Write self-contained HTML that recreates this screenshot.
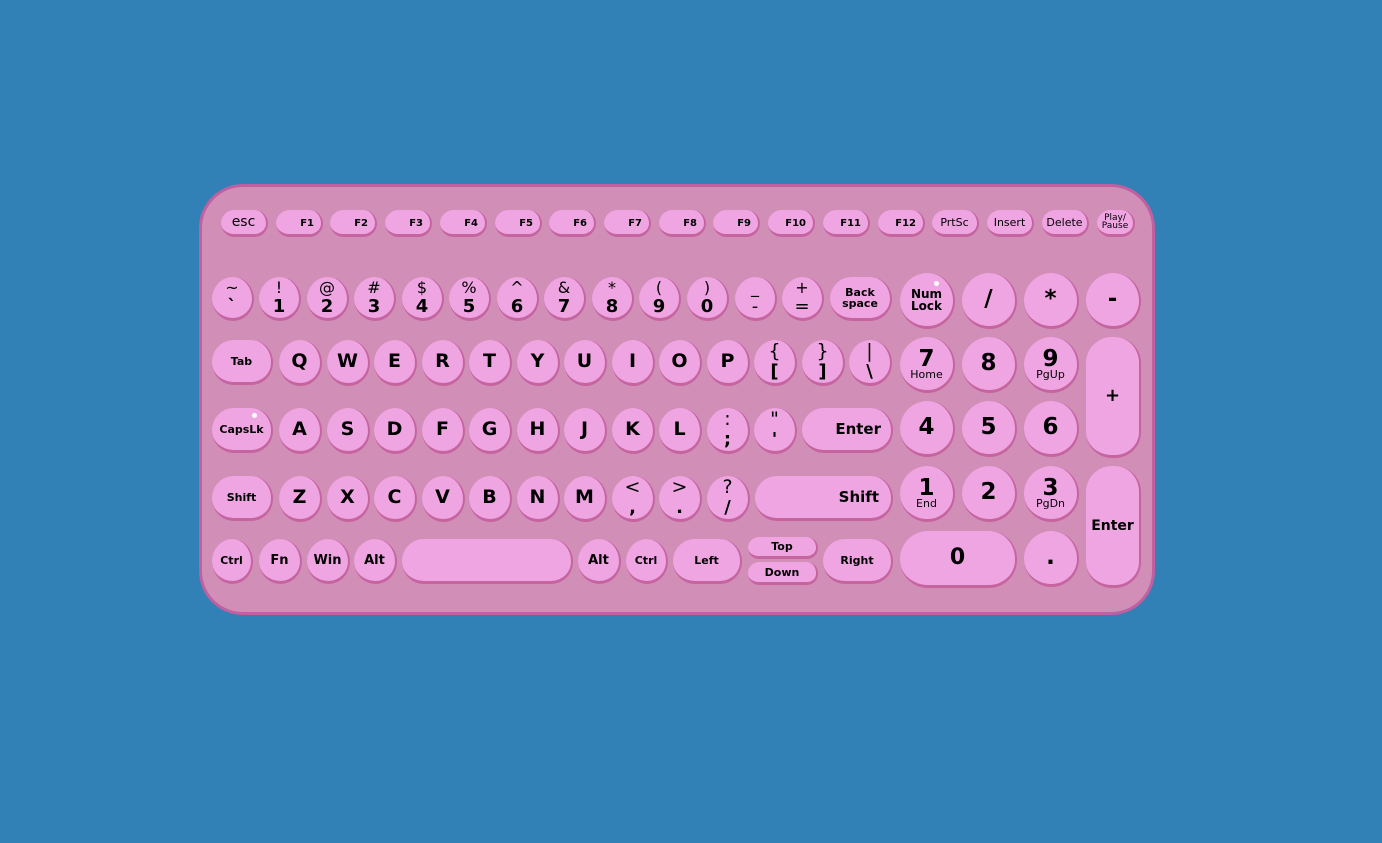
<!DOCTYPE html>
<html><head><meta charset="utf-8"><style>
html,body{margin:0;padding:0;}
body{width:1382px;height:843px;background:#3181b7;position:relative;overflow:hidden;font-family:"DejaVu Sans","Liberation Sans",sans-serif;}
.board{position:absolute;left:199px;top:184px;width:956px;height:431px;box-sizing:border-box;background:#d18fb8;border:3px solid #c060a0;border-radius:44px;}
.k{position:absolute;box-sizing:border-box;background:#f0a5e3;border-right:2px solid #c5649f;border-bottom:3px solid #c5649f;border-radius:22px;display:flex;flex-direction:column;align-items:center;justify-content:center;color:#000;font-weight:bold;line-height:1;text-align:center;}
.r{border-radius:50%;}
.f{height:27px;width:47px;border-radius:14px;font-size:10px;align-items:flex-end;padding-right:7px;padding-top:3px;}
.f2{height:27px;width:47px;border-radius:14px;font-size:11px;font-weight:normal;}
.n{top:277px;width:42px;height:44px;font-size:16px;font-weight:normal;}
.n b{font-size:18px;margin-top:2px}
.q{width:43px;height:46px;font-size:19px;}
.s{font-size:11px;}
.np{width:55px;height:56px;font-size:23px;}
.np small{font-size:11px;font-weight:normal;margin-top:-2px}
.dot{position:absolute;width:5px;height:5px;border-radius:50%;background:#fff;}
</style></head><body>
<div class="board"></div>
<div class="k f2" style="left:221px;top:210px;font-size:14px;">esc</div>
<div class="k f" style="left:276px;top:210px;">F1</div>
<div class="k f" style="left:330px;top:210px;">F2</div>
<div class="k f" style="left:385px;top:210px;">F3</div>
<div class="k f" style="left:440px;top:210px;">F4</div>
<div class="k f" style="left:495px;top:210px;">F5</div>
<div class="k f" style="left:549px;top:210px;">F6</div>
<div class="k f" style="left:604px;top:210px;">F7</div>
<div class="k f" style="left:659px;top:210px;">F8</div>
<div class="k f" style="left:713px;top:210px;">F9</div>
<div class="k f" style="left:768px;top:210px;">F10</div>
<div class="k f" style="left:823px;top:210px;">F11</div>
<div class="k f" style="left:878px;top:210px;">F12</div>
<div class="k f2" style="left:932px;top:210px;">PrtSc</div>
<div class="k f2" style="left:987px;top:210px;">Insert</div>
<div class="k f2" style="left:1042px;top:210px;">Delete</div>
<div class="k f2" style="left:1097px;top:210px;width:38px;font-size:9px;line-height:0.9">Play/<br>Pause</div>
<div class="k n r" style="left:212px;">~<b>`</b></div>
<div class="k n r" style="left:259px;">!<b>1</b></div>
<div class="k n r" style="left:307px;">@<b>2</b></div>
<div class="k n r" style="left:354px;">#<b>3</b></div>
<div class="k n r" style="left:402px;">$<b>4</b></div>
<div class="k n r" style="left:449px;">%<b>5</b></div>
<div class="k n r" style="left:497px;">^<b>6</b></div>
<div class="k n r" style="left:544px;">&amp;<b>7</b></div>
<div class="k n r" style="left:592px;">*<b>8</b></div>
<div class="k n r" style="left:639px;">(<b>9</b></div>
<div class="k n r" style="left:687px;">)<b>0</b></div>
<div class="k n r" style="left:735px;">_<b style="font-weight:normal">-</b></div>
<div class="k n r" style="left:782px;">+<b style="font-weight:normal">=</b></div>
<div class="k s" style="left:830px;top:277px;width:62px;height:44px;font-size:11px;">Back<br>space</div>
<div class="k np r s" style="left:900px;top:273px;font-size:12px;">Num<br>Lock</div>
<div class="dot" style="left:934px;top:281px;"></div>
<div class="k np r" style="left:962px;top:273px;">/</div>
<div class="k np r" style="left:1024px;top:273px;">*</div>
<div class="k np r" style="left:1086px;top:273px;">-</div>
<div class="k s" style="left:212px;top:340px;width:61px;height:45px;">Tab</div>
<div class="k q r" style="left:279px;top:340px;">Q</div>
<div class="k q r" style="left:327px;top:340px;">W</div>
<div class="k q r" style="left:374px;top:340px;">E</div>
<div class="k q r" style="left:422px;top:340px;">R</div>
<div class="k q r" style="left:469px;top:340px;">T</div>
<div class="k q r" style="left:517px;top:340px;">Y</div>
<div class="k q r" style="left:564px;top:340px;">U</div>
<div class="k q r" style="left:612px;top:340px;">I</div>
<div class="k q r" style="left:659px;top:340px;">O</div>
<div class="k q r" style="left:707px;top:340px;">P</div>
<div class="k q r n" style="left:754px;top:340px;">{<b>[</b></div>
<div class="k q r n" style="left:802px;top:340px;">}<b>]</b></div>
<div class="k q r n" style="left:849px;top:340px;">|<b>\</b></div>
<div class="k np r" style="left:900px;top:337px;">7<small>Home</small></div>
<div class="k np r" style="left:962px;top:337px;">8</div>
<div class="k np r" style="left:1024px;top:337px;">9<small>PgUp</small></div>
<div class="k" style="left:1086px;top:337px;width:55px;height:121px;border-radius:26px;font-size:18px;">+</div>
<div class="k s" style="left:212px;top:408px;width:61px;height:45px;">CapsLk</div>
<div class="dot" style="left:252px;top:413px;"></div>
<div class="k q r" style="left:279px;top:408px;">A</div>
<div class="k q r" style="left:327px;top:408px;">S</div>
<div class="k q r" style="left:374px;top:408px;">D</div>
<div class="k q r" style="left:422px;top:408px;">F</div>
<div class="k q r" style="left:469px;top:408px;">G</div>
<div class="k q r" style="left:517px;top:408px;">H</div>
<div class="k q r" style="left:564px;top:408px;">J</div>
<div class="k q r" style="left:612px;top:408px;">K</div>
<div class="k q r" style="left:659px;top:408px;">L</div>
<div class="k q r n" style="left:707px;top:408px;">:<b>;</b></div>
<div class="k q r n" style="left:754px;top:408px;">"<b>'</b></div>
<div class="k" style="left:802px;top:408px;width:91px;height:45px;font-size:15px;align-items:flex-end;padding-right:10px;">Enter</div>
<div class="k np r" style="left:900px;top:401px;">4</div>
<div class="k np r" style="left:962px;top:401px;">5</div>
<div class="k np r" style="left:1024px;top:401px;">6</div>
<div class="k s" style="left:212px;top:476px;width:61px;height:45px;">Shift</div>
<div class="k q r" style="left:279px;top:476px;">Z</div>
<div class="k q r" style="left:327px;top:476px;">X</div>
<div class="k q r" style="left:374px;top:476px;">C</div>
<div class="k q r" style="left:422px;top:476px;">V</div>
<div class="k q r" style="left:469px;top:476px;">B</div>
<div class="k q r" style="left:517px;top:476px;">N</div>
<div class="k q r" style="left:564px;top:476px;">M</div>
<div class="k q r n" style="left:612px;top:476px;">&lt;<b>,</b></div>
<div class="k q r n" style="left:659px;top:476px;">&gt;<b>.</b></div>
<div class="k q r n" style="left:707px;top:476px;">?<b>/</b></div>
<div class="k" style="left:755px;top:476px;width:138px;height:45px;font-size:15px;align-items:flex-end;padding-right:12px;">Shift</div>
<div class="k np r" style="left:900px;top:466px;">1<small>End</small></div>
<div class="k np r" style="left:962px;top:466px;">2</div>
<div class="k np r" style="left:1024px;top:466px;">3<small>PgDn</small></div>
<div class="k" style="left:1086px;top:466px;width:55px;height:122px;border-radius:26px;font-size:14px;">Enter</div>
<div class="k r s" style="left:212px;top:539px;width:41px;height:45px;">Ctrl</div>
<div class="k r s" style="left:259px;top:539px;width:43px;height:45px;font-size:13px;">Fn</div>
<div class="k r s" style="left:307px;top:539px;width:43px;height:45px;font-size:13px;">Win</div>
<div class="k r s" style="left:354px;top:539px;width:43px;height:45px;font-size:13px;">Alt</div>
<div class="k" style="left:402px;top:539px;width:171px;height:45px;"></div>
<div class="k r s" style="left:578px;top:539px;width:43px;height:45px;font-size:13px;">Alt</div>
<div class="k r s" style="left:626px;top:539px;width:42px;height:45px;">Ctrl</div>
<div class="k s" style="left:673px;top:539px;width:69px;height:45px;">Left</div>
<div class="k s" style="left:748px;top:537px;width:70px;height:22px;border-radius:11px;">Top</div>
<div class="k s" style="left:748px;top:562px;width:70px;height:23px;border-radius:11px;">Down</div>
<div class="k s" style="left:823px;top:539px;width:70px;height:45px;">Right</div>
<div class="k" style="left:900px;top:531px;width:117px;height:57px;border-radius:28px;font-size:22px;">0</div>
<div class="k np r" style="left:1024px;top:531px;">.</div>
</body></html>
